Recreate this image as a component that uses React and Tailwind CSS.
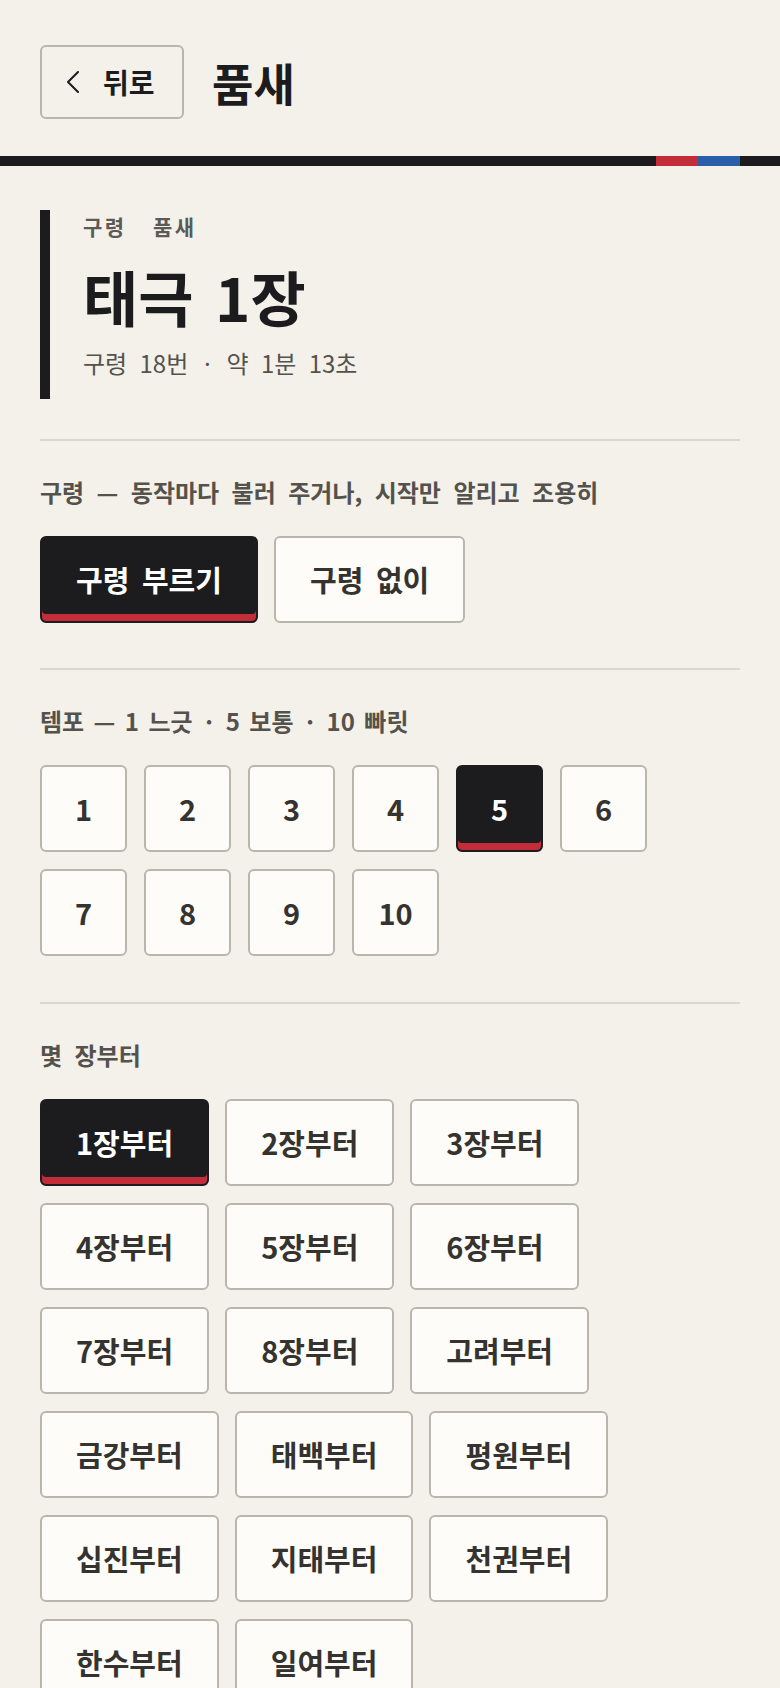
import { useState } from 'react';

const FONT = "font-['Noto_Sans_CJK_KR','Noto_Sans',sans-serif]";

const STARTS = [
  '1장부터', '2장부터', '3장부터', '4장부터', '5장부터', '6장부터', '7장부터', '8장부터',
  '고려부터', '금강부터', '태백부터', '평원부터', '십진부터', '지태부터', '천권부터', '한수부터', '일여부터',
];

function Choice({ active, onClick, className = '', children }) {
  const base = 'flex h-[87px] items-center justify-center rounded-md border-2 text-[29px] font-bold leading-none [word-spacing:6px]';
  const look = active
    ? 'border-[#1c1c1f] bg-[#1c1c1f] text-white shadow-[inset_0_-7px_0_#c22d39]'
    : 'border-[#bab6ae] bg-[#fdfcf8] text-[#35332f]';
  return (
    <button type="button" onClick={onClick} className={`${base} ${look} ${className}`}>
      {children}
    </button>
  );
}

function Section({ label, children, pb = 'pb-[45px]', spacing = '[word-spacing:7px]' }) {
  return (
    <section className={`border-t-2 border-[#dad7d0] pt-[35px] ${pb}`}>
      <h2 className={`mb-[28px] text-[24px] leading-[32px] font-bold text-[#55524d] ${spacing}`}>{label}</h2>
      {children}
    </section>
  );
}

export default function App() {
  const [callout, setCallout] = useState(true);
  const [tempo, setTempo] = useState(5);
  const [start, setStart] = useState('1장부터');

  return (
    <div className={`min-h-screen bg-[#f3f1ea] text-[#1c1c1f] ${FONT}`}>
      <header className="flex items-center gap-7 px-10 pt-[45px] pb-[37px]">
        <button type="button" className="flex h-[74px] w-[144px] items-center gap-[23px] rounded-md border-2 border-[#bab6ae] pl-[24px] text-[28px] leading-none font-bold">
          <svg width="14" height="22" viewBox="0 0 14 22" fill="none" stroke="#1c1c1f" strokeWidth="2" strokeLinecap="round" strokeLinejoin="round">
            <polyline points="12,1 2,11 12,21" />
          </svg>
          <span>뒤로</span>
        </button>
        <h1 className="text-[45px] leading-none font-bold">품새</h1>
      </header>

      <div className="flex h-[10px]">
        <div className="flex-1 bg-[#1c1c1f]" />
        <div className="w-[42px] bg-[#c22d39]" />
        <div className="w-[42px] bg-[#2a5ea8]" />
        <div className="w-[40px] bg-[#1c1c1f]" />
      </div>

      <main className="px-10 pt-[44px]">
        <div className="mb-[40px] border-l-[10px] border-[#1c1c1f] pb-[19px] pl-[33px]">
          <p className="text-[21px] leading-[33px] font-bold tracking-[0.12em] text-[#5c5a56] [word-spacing:19px]">구령 품새</p>
          <p className="mt-[18px] text-[60px] leading-[70px] font-bold [word-spacing:8px]">태극 1장</p>
          <p className="mt-[15px] text-[24px] leading-[34px] text-[#55524d] [word-spacing:7px]">구령 18번 · 약 1분 13초</p>
        </div>

        <Section label="구령 — 동작마다 불러 주거나, 시작만 알리고 조용히">
          <div className="flex gap-4">
            <Choice active={callout} onClick={() => setCallout(true)} className="px-[34px]">구령 부르기</Choice>
            <Choice active={!callout} onClick={() => setCallout(false)} className="px-[34px]">구령 없이</Choice>
          </div>
        </Section>

        <Section label="템포 — 1 느긋 · 5 보통 · 10 빠릿" pb="pb-[46px]" spacing="[word-spacing:4px]">
          <div className="flex flex-wrap gap-[17px]">
            {Array.from({ length: 10 }, (_, i) => i + 1).map((n) => (
              <Choice key={n} active={tempo === n} onClick={() => setTempo(n)} className="w-[87px]">{n}</Choice>
            ))}
          </div>
        </Section>

        <Section label="몇 장부터">
          <div className="flex flex-wrap gap-x-4 gap-y-[17px]">
            {STARTS.map((s) => (
              <Choice key={s} active={start === s} onClick={() => setStart(s)} className="px-[34px]">{s}</Choice>
            ))}
          </div>
        </Section>
      </main>
    </div>
  );
}
